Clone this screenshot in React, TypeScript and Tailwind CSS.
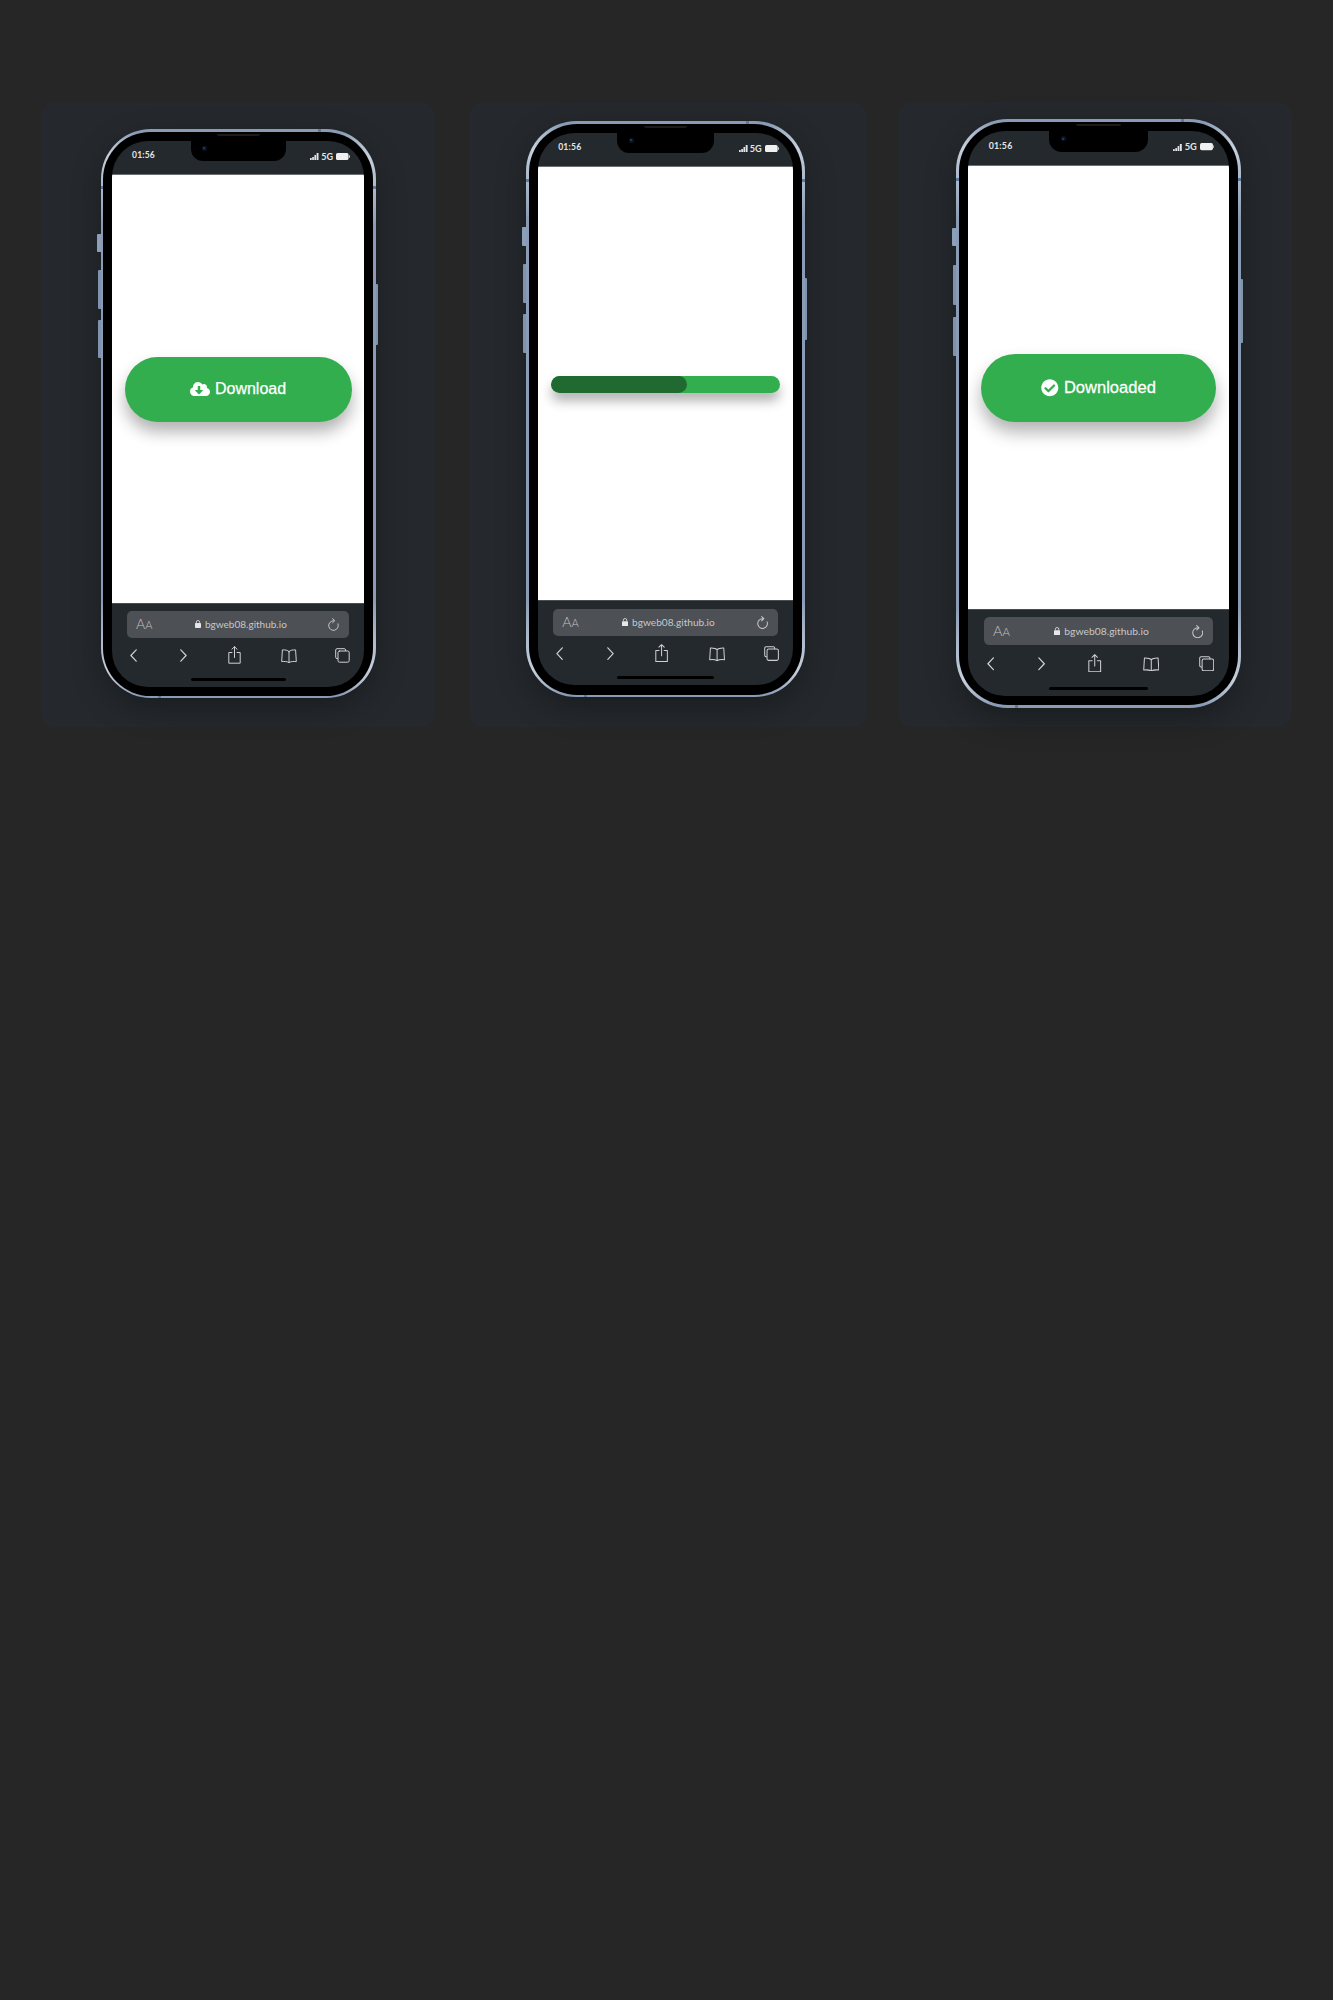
import type { ReactNode } from "react";
import { FaCloudDownloadAlt, FaCheckCircle } from "react-icons/fa";

function StatusIcons() {
  return (
    <div className="h-[9px] flex items-center gap-[2px] mt-[1px] text-[#e4e5e6]">
      <svg width="9" height="7" viewBox="0 0 9 7" className="mt-[1px]">
        <rect x="0" y="5" width="1.7" height="2" fill="#e4e5e6" />
        <rect x="2.2" y="4" width="1.7" height="3" fill="#e4e5e6" />
        <rect x="4.4" y="2" width="1.7" height="5" fill="#e4e5e6" />
        <rect x="6.6" y="0" width="1.9" height="7" fill="#e4e5e6" />
      </svg>
      <span className="mr-[1px] text-[9px] leading-none font-bold font-['Lato',sans-serif]">5G</span>
      <svg width="14" height="7" viewBox="0 0 14 7">
        <rect x="0" y="0" width="12.5" height="7" rx="1.6" fill="#f0f0f0" />
        <rect x="12.8" y="2.2" width="1.2" height="2.6" rx="0.5" fill="#d0d0d0" />
      </svg>
    </div>
  );
}

function Nav() {
  const s = { fill: "none", stroke: "#cfd1d3", strokeWidth: 1, strokeLinecap: "round" as const, strokeLinejoin: "round" as const };
  return (
    <div className="flex items-center h-[18px] mt-[9px] pl-[18px]">
      <svg width="7" height="13" viewBox="0 0 7 13" {...s} strokeWidth={1.2}>
        <path d="M6.2 .8 .9 6.5l5.3 5.7" />
      </svg>
      <svg width="7" height="13" viewBox="0 0 7 13" {...s} strokeWidth={1.2} className="ml-[43px]">
        <path d="M.8 .8 6.1 6.5.8 12.2" />
      </svg>
      <svg width="13" height="18" viewBox="0 0 13 18" {...s} className="ml-[41px] -mt-[2px]">
        <path d="M4 6.5H.8v10.7h11.4V6.5H9M6.5 11.5V.8M3.9 3.2 6.5.7l2.6 2.5" />
      </svg>
      <svg width="16" height="14" viewBox="0 0 16 14" {...s} className="ml-[40px]">
        <path d="M8 2.6C6.6 1 4 .8 1.4.9L.7 12.6c2.7-.3 5.5-.2 7.3 1 1.8-1.2 4.6-1.3 7.3-1L14.6.9C12 .8 9.4 1 8 2.6ZM8 2.6v11" />
      </svg>
      <svg width="15" height="15" viewBox="0 0 15 15" {...s} className="ml-[38px] -mt-[1px]">
        <path d="M2.6 10.6H2A1.4 1.4 0 0 1 .7 9.2V2A1.4 1.4 0 0 1 2 .7h7.2A1.4 1.4 0 0 1 10.6 2v.6" />
        <rect x="3" y="3" width="11.2" height="11.2" rx="1.6" />
      </svg>
    </div>
  );
}

function Phone({ zoom, children }: { zoom: string; children: ReactNode }) {
  return (
    <div className={`relative w-[275px] h-[569px] shrink-0 rounded-[50px] p-[2.5px] shadow-[0_10px_30px_rgba(0,0,0,0.3)] bg-[conic-gradient(#8a9cb5_0deg,#8a9cb5_20deg,#c6d0dc_27deg,#8a9cb5_36deg,#8a9cb5_144deg,#c6d0dc_153deg,#8a9cb5_160deg,#8a9cb5_200deg,#c6d0dc_207deg,#8a9cb5_216deg,#8a9cb5_324deg,#c6d0dc_333deg,#8a9cb5_340deg,#8a9cb5_360deg)] ${zoom}`}>
      <div className="absolute -left-[4px] top-[105px] w-[4px] h-[18px] rounded-l-[1px] bg-[#8c9fb8]" />
      <div className="absolute -left-[3px] top-[141px] w-[3px] h-[39px] rounded-l-[1px] bg-[#7f93ae]" />
      <div className="absolute -left-[3px] top-[191px] w-[3px] h-[38px] rounded-l-[1px] bg-[#7f93ae]" />
      <div className="absolute -right-[2px] top-[155px] w-[2px] h-[61px] rounded-r-[1px] bg-[#7f93ae]" />
      <div className="absolute left-0 top-[57px] w-[2.5px] h-[3px] bg-[#5f78a0]" />
      <div className="absolute right-0 top-[57px] w-[2.5px] h-[3px] bg-[#5f78a0]" />
      <div className="absolute left-[217px] top-0 w-[3px] h-[2.5px] bg-[#5f78a0]" />
      <div className="absolute left-[57px] bottom-0 w-[3px] h-[2.5px] bg-[#5f78a0]" />
      <div className="h-full rounded-[47.5px] bg-black p-[9px]">
        <div className="relative h-full flex flex-col rounded-[36px] overflow-hidden bg-[#24292d]">
          <div className="relative h-[34px] shrink-0 flex items-start justify-between pl-[20px] pr-[14px] pt-[10px] border-b border-[#6b6f72]">
            <span className="text-[8.5px] leading-[9px] font-bold tracking-[0.2px] text-[#e4e5e6] font-['Lato',sans-serif]">01:56</span>
            <StatusIcons />
            <div className="absolute left-[78.5px] top-0 w-[95px] h-[20px] rounded-b-[12px] bg-black">
              <div className="absolute left-[11px] top-[5px] w-[5px] h-[5px] rounded-full bg-[#0c1322] flex items-center justify-center">
                <div className="w-[2px] h-[2px] rounded-full bg-[#27407a]" />
              </div>
            </div>
          </div>
          <div className="flex-1 bg-white flex items-center justify-center pt-[1px]">{children}</div>
          <div className="h-[84px] shrink-0 pt-[7px] border-t border-[#4a4d50]">
            <div className="mx-[15px] h-[27px] rounded-[5px] bg-[#4d5054] flex items-center pl-[9px] pr-[10px] text-[#c6c8ca] font-['Lato',sans-serif]">
              <span className="w-[60px] flex items-baseline text-[#c0c2c4] font-light">
                <span className="text-[14px] leading-none">A</span>
                <span className="text-[11px] leading-none">A</span>
              </span>
              <svg width="6" height="8" viewBox="0 0 6 8" className="-ml-[1px]">
                <path d="M1.3 3.2V2.2a1.7 1.7 0 0 1 3.4 0v1" fill="none" stroke="#e6e7e8" strokeWidth=".8" />
                <rect x="0" y="3.1" width="6" height="4.9" rx=".8" fill="#e6e7e8" />
              </svg>
              <span className="ml-[4px] text-[10px] leading-none">bgweb08.github.io</span>
              <svg width="11" height="13" viewBox="0 0 11 13" fill="none" stroke="#c6c8ca" strokeWidth="1" strokeLinecap="round" strokeLinejoin="round" className="ml-auto">
                <path d="M5.5 2.7A4.8 4.8 0 1 0 10 5.8M4.6.6 6.8 2.7 4.6 4.8" />
              </svg>
            </div>
            <Nav />
            <div className="mx-auto mt-[13px] w-[95px] h-[3px] rounded-full bg-black" />
          </div>
        </div>
      </div>
      <div className="absolute left-[116px] top-[5px] w-[43px] h-[2px] rounded-b-full bg-[#1e1a1a]" />
    </div>
  );
}

function PillButton({ children }: { children: ReactNode }) {
  return (
    <div className="w-[227px] h-[65px] rounded-full bg-[#32ae4f] shadow-[0_10px_16px_rgba(0,0,0,0.3)] flex items-center justify-center gap-[5px] text-white text-[16px] [-webkit-text-stroke:0.25px_white] font-['Liberation_Sans',sans-serif]">
      {children}
    </div>
  );
}

export default function App() {
  return (
    <div className="min-h-[2000px] bg-[#262626]">
      <div className="flex pl-[41px] pt-[102px]">
        <div className="w-[394px] h-[625px] rounded-[14px] bg-[#25292d] flex justify-center pt-[27px]">
          <Phone zoom="[zoom:1]">
            <PillButton>
              <FaCloudDownloadAlt className="w-[20px] h-[16px]" />
              <span>Download</span>
            </PillButton>
          </Phone>
        </div>
        <div className="ml-[34px] w-[398px] h-[625px] rounded-[14px] bg-[#25292d] flex justify-center pt-[19px] pr-[5px]">
          <Phone zoom="[zoom:1.0125]">
            <div className="w-[227px] h-[17px] rounded-full bg-[#32ae4f] shadow-[0_8px_12px_rgba(0,0,0,0.3)] overflow-hidden">
              <div className="w-[59.5%] h-full rounded-full bg-[#206a31]" />
            </div>
          </Phone>
        </div>
        <div className="ml-[31px] w-[394px] h-[625px] rounded-[14px] bg-[#25292d] flex justify-center pt-[17px] pl-[7px]">
          <Phone zoom="[zoom:1.035]">
            <PillButton>
              <FaCheckCircle className="w-[17px] h-[17px]" />
              <span>Downloaded</span>
            </PillButton>
          </Phone>
        </div>
      </div>
    </div>
  );
}
